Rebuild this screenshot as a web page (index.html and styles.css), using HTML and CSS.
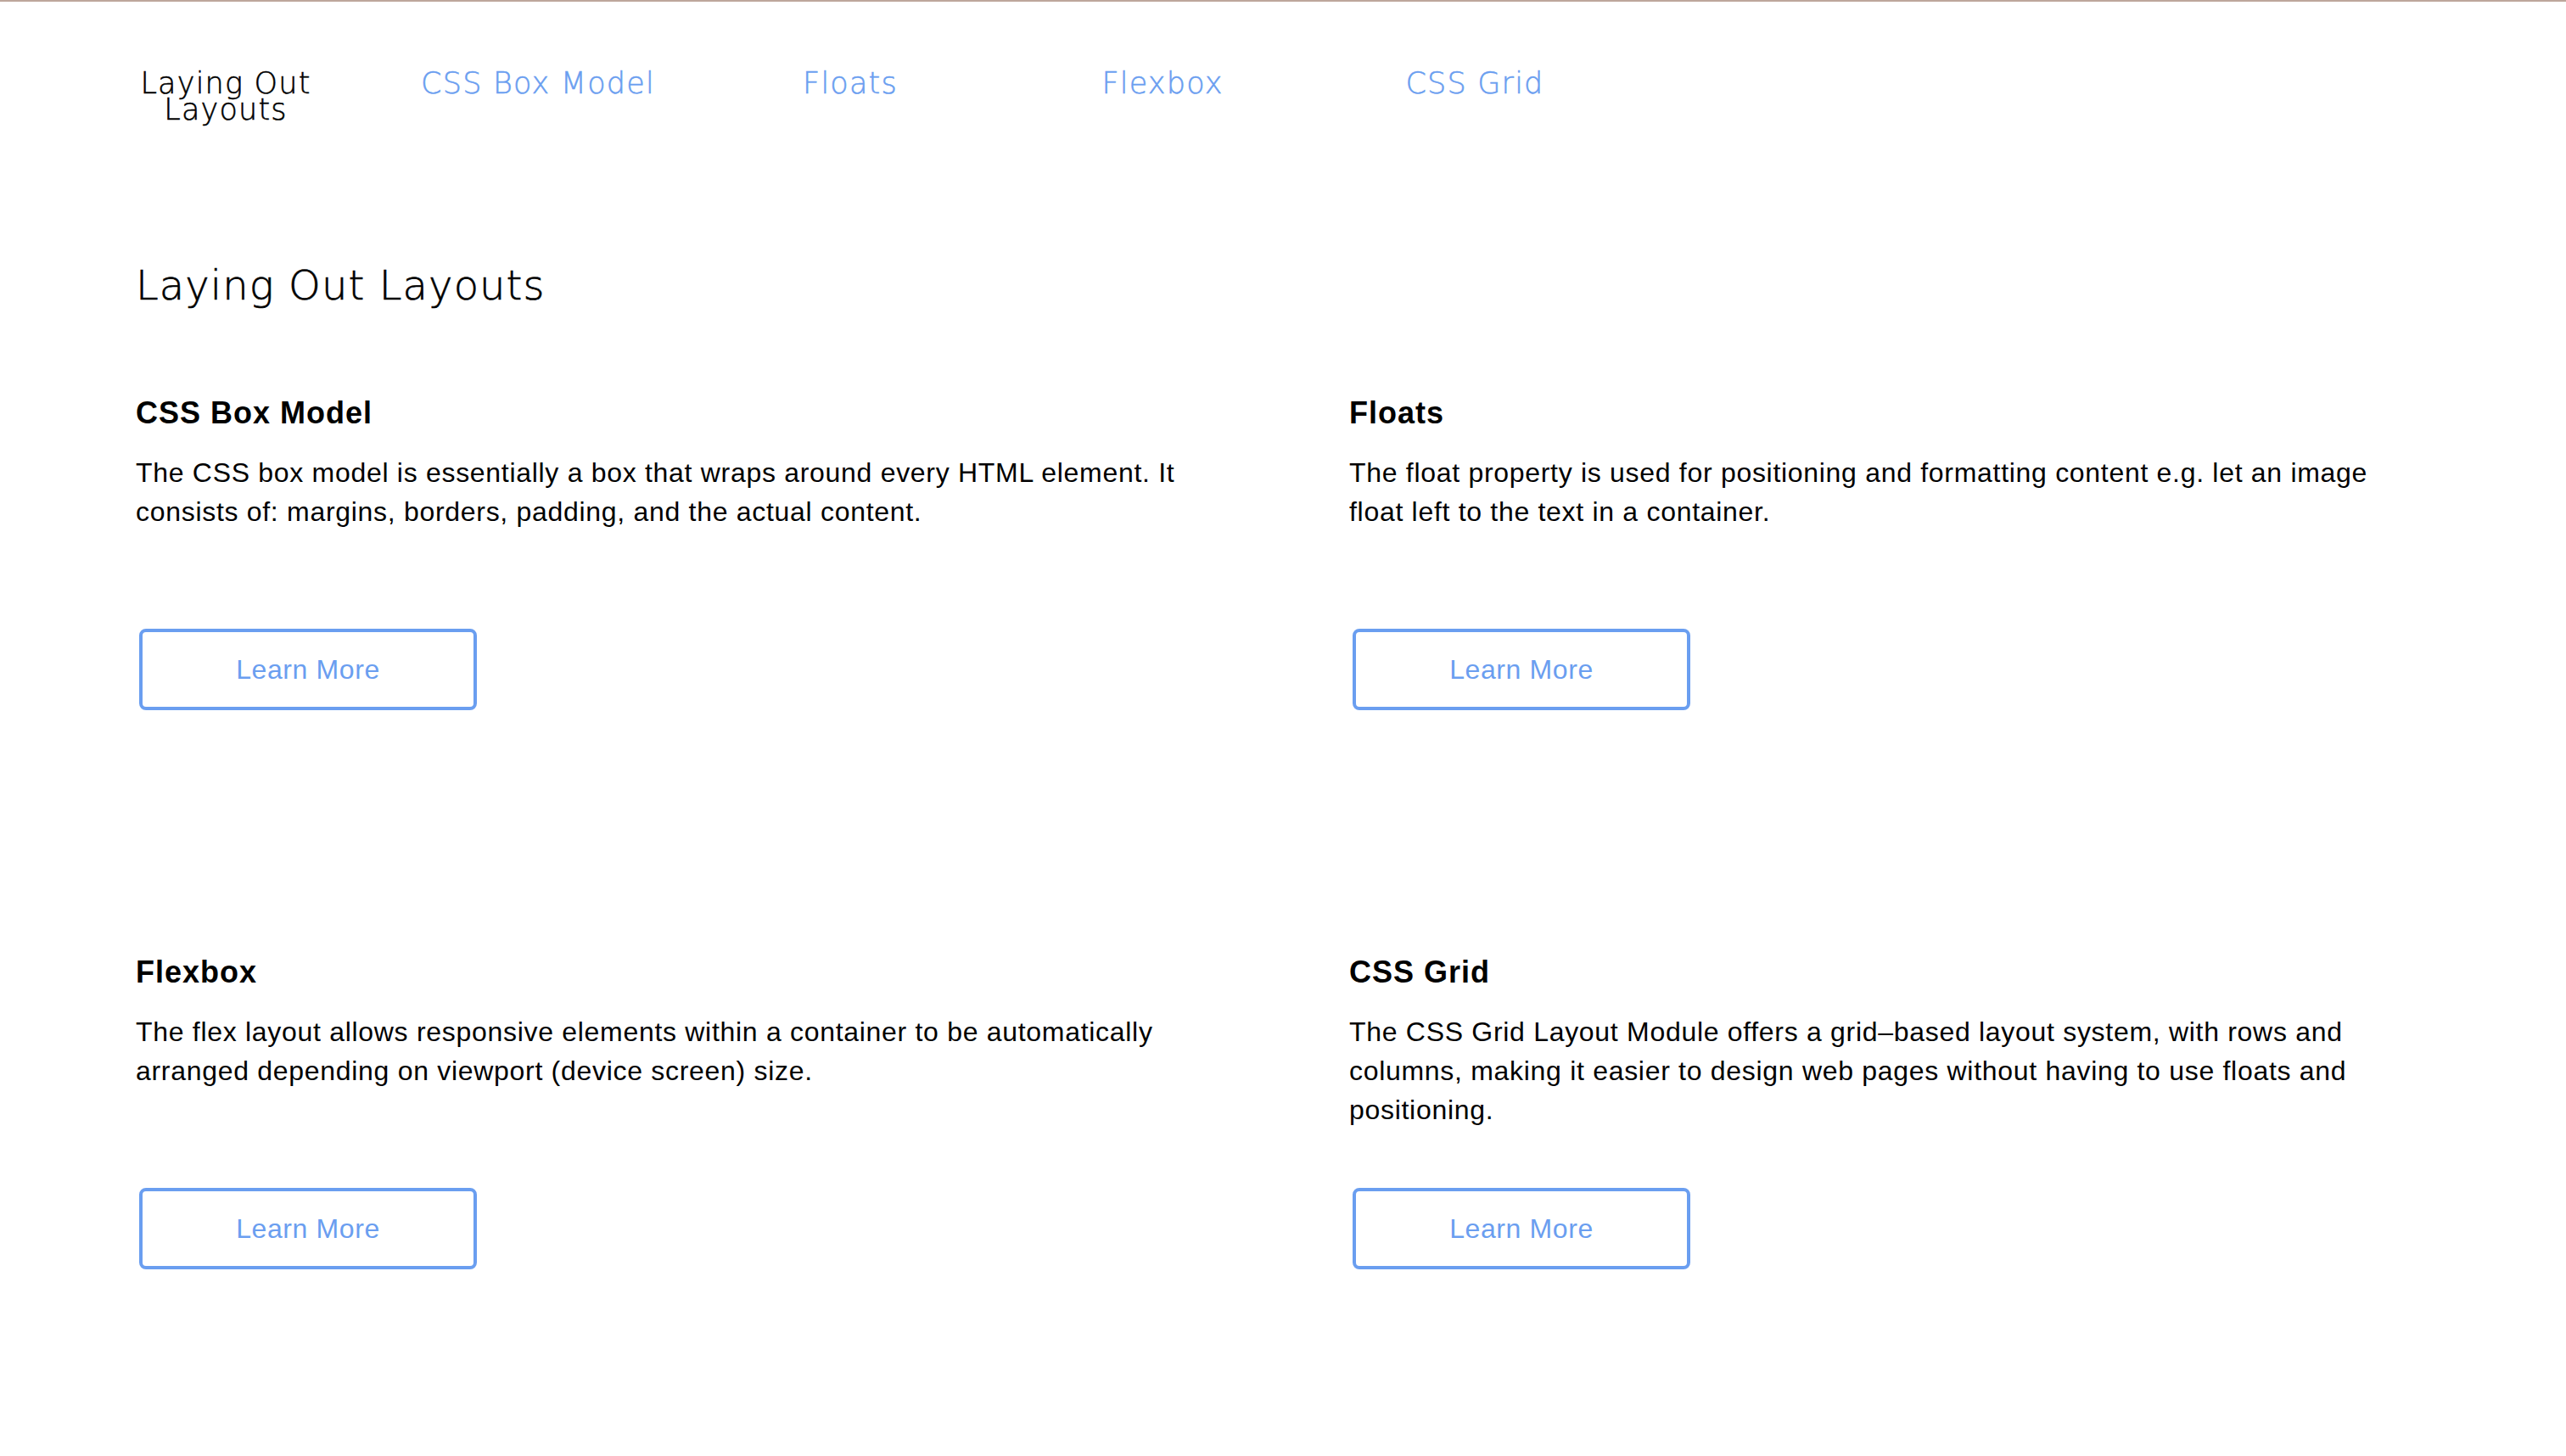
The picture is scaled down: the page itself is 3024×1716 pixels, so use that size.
FILE: index.html
```html
<!DOCTYPE html>
<html lang="en">
<head>
<meta charset="utf-8">
<title>Laying Out Layouts</title>
<link rel="stylesheet" href="styles.css">
</head>
<body>
  <nav class="nav">
    <a class="nav-item brand" href="#">Laying Out<br>Layouts</a>
    <a class="nav-item" href="#box-model">CSS Box Model</a>
    <a class="nav-item" href="#floats">Floats</a>
    <a class="nav-item" href="#flexbox">Flexbox</a>
    <a class="nav-item" href="#grid">CSS Grid</a>
  </nav>
  <main class="page">
    <h1 class="page-title">Laying Out Layouts</h1>
    <section class="topics">
      <article class="topic" id="box-model">
        <h3 class="topic-title">CSS Box Model</h3>
        <p class="topic-text">The CSS box model is essentially a box that wraps around every HTML element. It consists of: margins, borders, padding, and the actual content.</p>
        <button class="btn">Learn More</button>
      </article>
      <article class="topic" id="floats">
        <h3 class="topic-title">Floats</h3>
        <p class="topic-text">The float property is used for positioning and formatting content e.g. let an image float left to the text in a container.</p>
        <button class="btn">Learn More</button>
      </article>
      <article class="topic" id="flexbox">
        <h3 class="topic-title">Flexbox</h3>
        <p class="topic-text">The flex layout allows responsive elements within a container to be automatically arranged depending on viewport (device screen) size.</p>
        <button class="btn">Learn More</button>
      </article>
      <article class="topic" id="grid">
        <h3 class="topic-title">CSS Grid</h3>
        <p class="topic-text">The CSS Grid Layout Module offers a grid–based layout system, with rows and columns, making it easier to design web pages without having to use floats and positioning.</p>
        <button class="btn">Learn More</button>
      </article>
    </section>
  </main>
</body>
</html>
```

FILE: styles.css
```css
html, body {
  background: #ffffff;
}

body {
  margin: 0;
  border-top: 2px solid #bea69c;
  font-family: "Liberation Sans", Arial, sans-serif;
  color: #000000;
}

.nav {
  display: flex;
  align-items: flex-start;
  padding: 81px 0 0 82px;
}

.nav-item {
  width: 368px;
  text-align: center;
  font-family: "DejaVu Sans", sans-serif;
  font-weight: 200;
  font-size: 35px;
  line-height: 31px;
  letter-spacing: 1.2px;
  color: #6a9ef0;
  text-decoration: none;
  -webkit-text-stroke: 0.5px currentColor;
}

.nav-item.brand {
  color: #000000;
}

.page {
  padding: 0 160px;
}

.page-title {
  margin: 163px 0 0;
  font-family: "DejaVu Sans", sans-serif;
  font-weight: 200;
  font-size: 48px;
  line-height: 56px;
  letter-spacing: 1.1px;
  -webkit-text-stroke: 0.6px currentColor;
}

.topics {
  display: grid;
  grid-template-columns: 1248px 1248px;
  column-gap: 182px;
  row-gap: 288px;
  margin-top: 102px;
}

.topic {
  display: flex;
  flex-direction: column;
  align-items: flex-start;
}

.topic-title {
  margin: 0;
  font-size: 36px;
  line-height: 42px;
  font-weight: 700;
  letter-spacing: 1px;
}

.topic-text {
  margin: 26px 0 0;
  min-height: 138px;
  font-size: 32px;
  line-height: 46px;
  letter-spacing: 0.7px;
}

.btn {
  margin: 69px 0 0 4px;
  width: 398px;
  height: 96px;
  box-sizing: border-box;
  border: 4px solid #6a9ef0;
  border-radius: 8px;
  background: #ffffff;
  color: #6a9ef0;
  font-family: "Liberation Sans", Arial, sans-serif;
  font-size: 32px;
  letter-spacing: 0.6px;
  cursor: pointer;
}
```
